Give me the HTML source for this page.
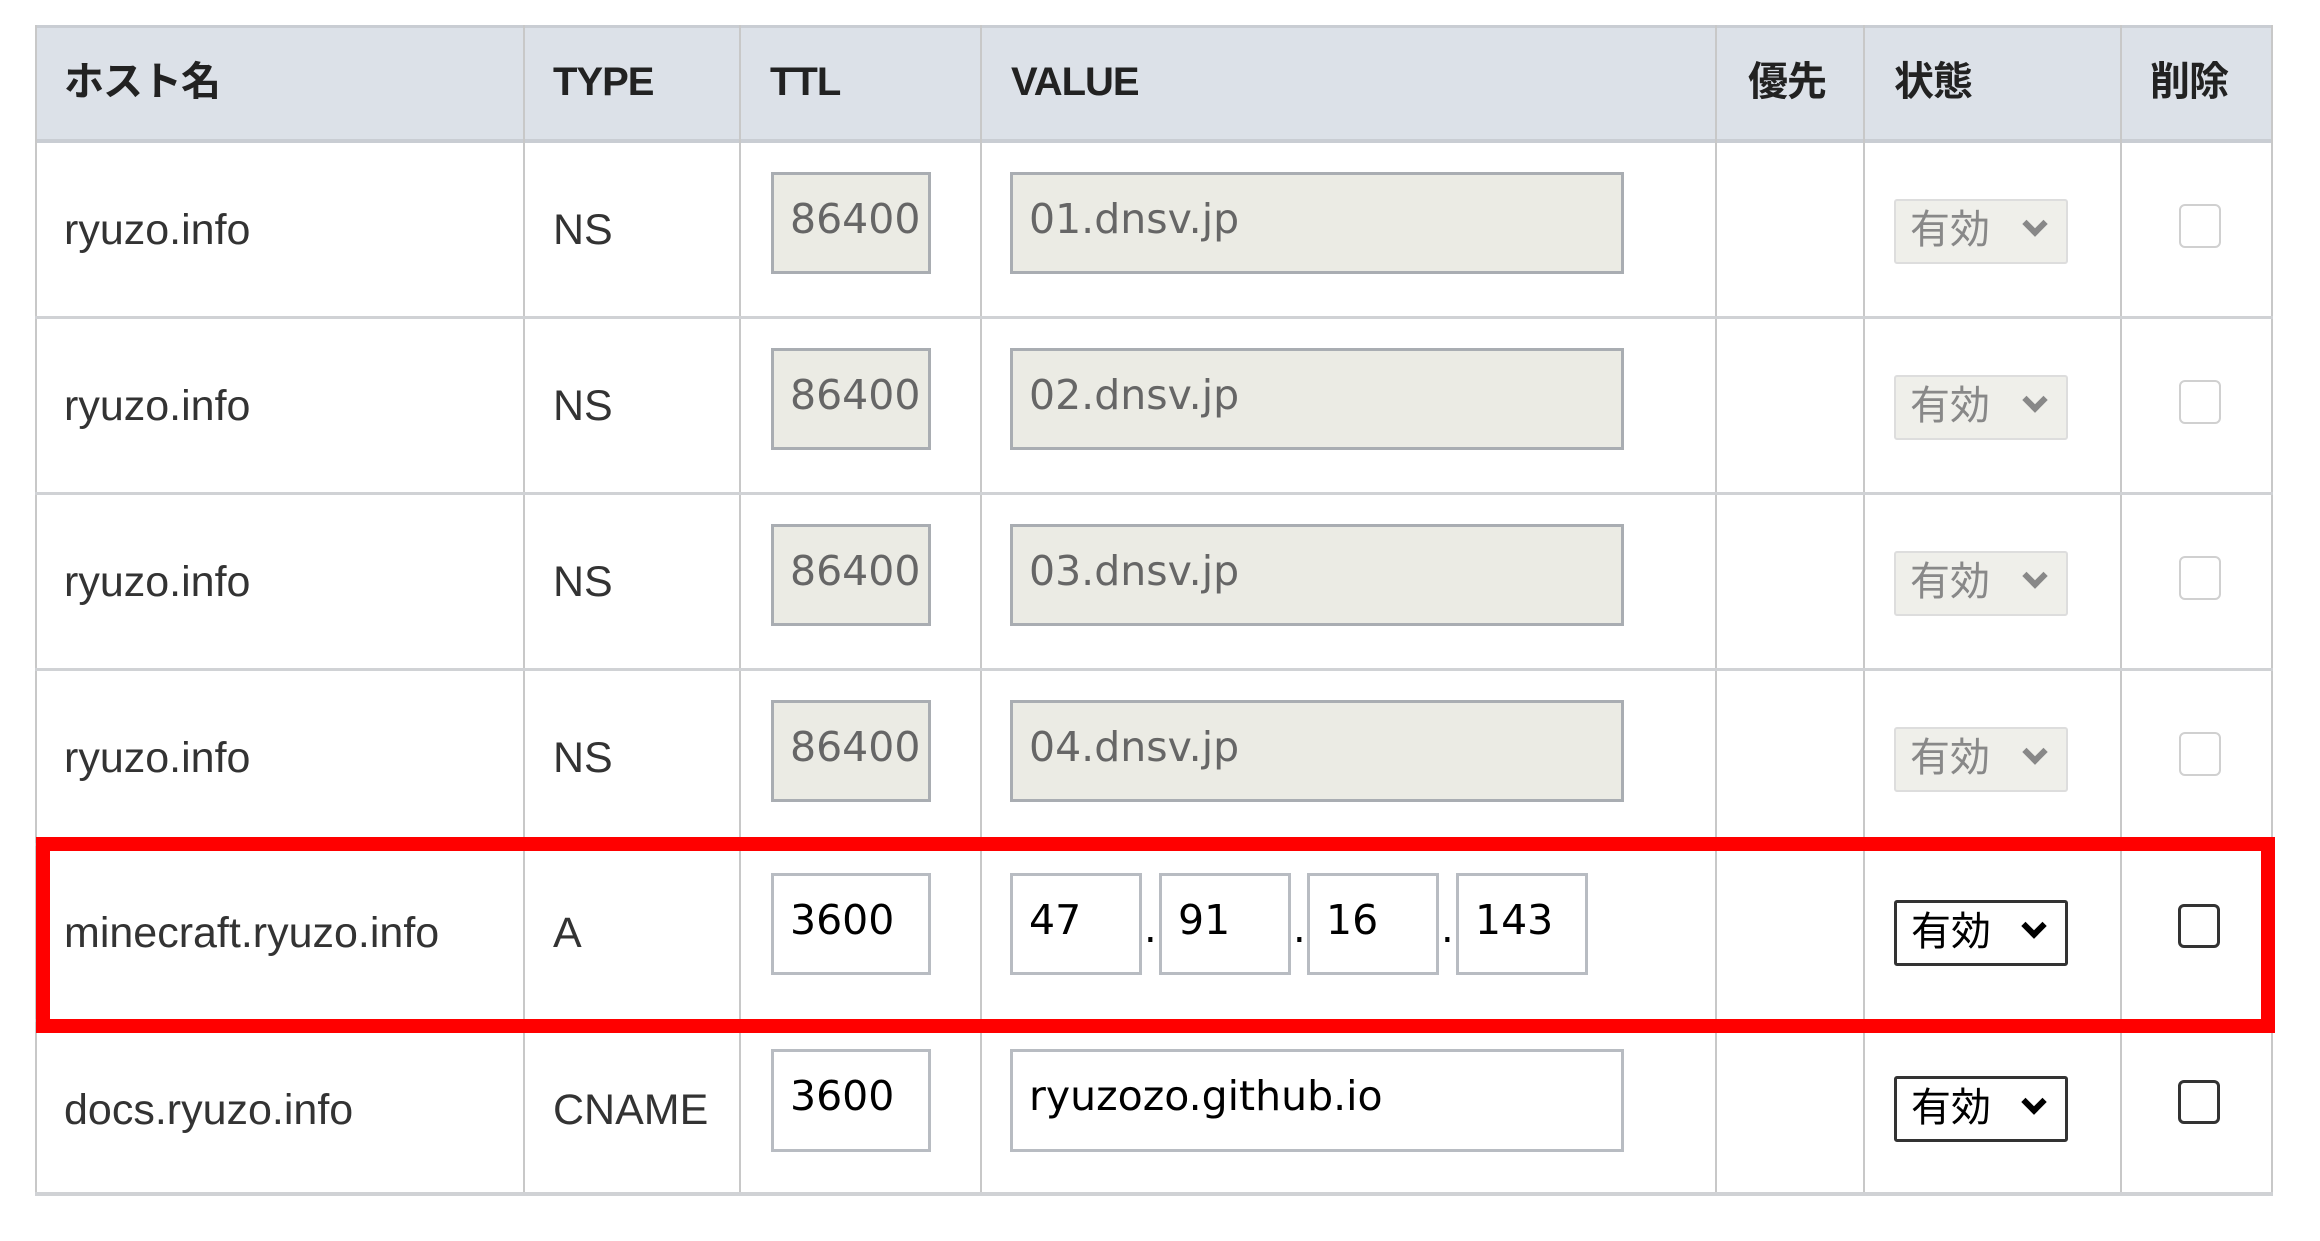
<!DOCTYPE html>
<html><head><meta charset="utf-8"><style>
*{box-sizing:border-box;margin:0;padding:0}
body{width:2320px;height:1241px;background:#fff;position:relative;overflow:hidden;font-family:"Liberation Sans","Noto Sans CJK JP",sans-serif;color:#333}
.a{position:absolute}
.hdr{left:35px;top:25px;width:2238px;height:118px;background:#dce1e8;border-top:3px solid #c9cdd3;border-bottom:4px solid #c9cdd3}
.vl{width:2px;background:#c8c8c8;top:25px;height:1170px}
.hl{left:35px;width:2238px;height:3px;background:#d0d2d5}
.ht{font-weight:bold;font-size:40px;color:#222;top:58px;line-height:48px;letter-spacing:-1px}
.ct{font-size:43px;line-height:48px;letter-spacing:0px;color:#333}
.in{border:3px solid #b8bcc2;background:#fff;font-family:"DejaVu Sans",sans-serif;font-size:41px;color:#000;padding-left:16px;line-height:88px;overflow:hidden;white-space:nowrap}
.dis{background:#ebebe4;color:#666;border-color:#a9adb2}
.sel{border:3px solid #333;background:#fff;font-size:40px;color:#000;padding-left:14px;line-height:58px;border-radius:3px}
.sel.d{border:2px solid #ddd;background:#efefea;color:#888}
.chev{position:absolute;right:22px;top:14px;width:18px;height:18px;border-right:6px solid currentColor;border-bottom:6px solid currentColor;transform:rotate(45deg)}
.cb{width:42px;height:44px;border:3px solid #333;border-radius:6px;background:#fff}
.cb.d{border:2px solid #d0d0d0}
.dot{font-family:"DejaVu Sans",sans-serif;font-size:40px;color:#000}
</style></head><body>
<div class="a hdr"></div>
<div class="a ht" style="left:64px">ホスト名</div>
<div class="a ht" style="left:553px">TYPE</div>
<div class="a ht" style="left:770px">TTL</div>
<div class="a ht" style="left:1011px">VALUE</div>
<div class="a ht" style="left:1748px">優先</div>
<div class="a ht" style="left:1894px">状態</div>
<div class="a ht" style="left:2150px">削除</div>

<div class="a vl" style="left:35px"></div>
<div class="a vl" style="left:523px"></div>
<div class="a vl" style="left:739px"></div>
<div class="a vl" style="left:980px"></div>
<div class="a vl" style="left:1715px"></div>
<div class="a vl" style="left:1863px"></div>
<div class="a vl" style="left:2120px"></div>
<div class="a vl" style="left:2271px"></div>

<div class="a hl" style="top:316px"></div>
<div class="a hl" style="top:492px"></div>
<div class="a hl" style="top:668px"></div>
<div class="a hl" style="top:843px"></div>
<div class="a hl" style="top:1019px"></div>
<div class="a hl" style="top:1192px;height:4px"></div>

<div class="a ct" style="left:64px;top:206px">ryuzo.info</div>
<div class="a ct" style="left:553px;top:206px">NS</div>
<div class="a in dis" style="left:771px;top:172px;width:160px;height:102px">86400</div>
<div class="a in dis" style="left:1010px;top:172px;width:614px;height:102px">01.dnsv.jp</div>
<div class="a sel d" style="left:1894px;top:199px;width:174px;height:65px">有効<span class="chev"></span></div>
<div class="a cb d" style="left:2179px;top:204px"></div>

<div class="a ct" style="left:64px;top:382px">ryuzo.info</div>
<div class="a ct" style="left:553px;top:382px">NS</div>
<div class="a in dis" style="left:771px;top:348px;width:160px;height:102px">86400</div>
<div class="a in dis" style="left:1010px;top:348px;width:614px;height:102px">02.dnsv.jp</div>
<div class="a sel d" style="left:1894px;top:375px;width:174px;height:65px">有効<span class="chev"></span></div>
<div class="a cb d" style="left:2179px;top:380px"></div>

<div class="a ct" style="left:64px;top:558px">ryuzo.info</div>
<div class="a ct" style="left:553px;top:558px">NS</div>
<div class="a in dis" style="left:771px;top:524px;width:160px;height:102px">86400</div>
<div class="a in dis" style="left:1010px;top:524px;width:614px;height:102px">03.dnsv.jp</div>
<div class="a sel d" style="left:1894px;top:551px;width:174px;height:65px">有効<span class="chev"></span></div>
<div class="a cb d" style="left:2179px;top:556px"></div>

<div class="a ct" style="left:64px;top:734px">ryuzo.info</div>
<div class="a ct" style="left:553px;top:734px">NS</div>
<div class="a in dis" style="left:771px;top:700px;width:160px;height:102px">86400</div>
<div class="a in dis" style="left:1010px;top:700px;width:614px;height:102px">04.dnsv.jp</div>
<div class="a sel d" style="left:1894px;top:727px;width:174px;height:65px">有効<span class="chev"></span></div>
<div class="a cb d" style="left:2179px;top:732px"></div>

<div class="a ct" style="left:64px;top:909px">minecraft.ryuzo.info</div>
<div class="a ct" style="left:553px;top:909px">A</div>
<div class="a in" style="left:771px;top:873px;width:160px;height:102px">3600</div>
<div class="a in" style="left:1010px;top:873px;width:132px;height:102px">47</div>
<div class="a dot" style="left:1144px;top:906px">.</div>
<div class="a in" style="left:1159px;top:873px;width:132px;height:102px">91</div>
<div class="a dot" style="left:1293px;top:906px">.</div>
<div class="a in" style="left:1307px;top:873px;width:132px;height:102px">16</div>
<div class="a dot" style="left:1441px;top:906px">.</div>
<div class="a in" style="left:1456px;top:873px;width:132px;height:102px">143</div>
<div class="a sel" style="left:1894px;top:900px;width:174px;height:66px">有効<span class="chev"></span></div>
<div class="a cb" style="left:2178px;top:904px"></div>

<div class="a ct" style="left:64px;top:1086px">docs.ryuzo.info</div>
<div class="a ct" style="left:553px;top:1086px">CNAME</div>
<div class="a in" style="left:771px;top:1049px;width:160px;height:103px">3600</div>
<div class="a in" style="left:1010px;top:1049px;width:614px;height:103px">ryuzozo.github.io</div>
<div class="a sel" style="left:1894px;top:1076px;width:174px;height:66px">有効<span class="chev"></span></div>
<div class="a cb" style="left:2178px;top:1080px"></div>

<div class="a" style="left:36px;top:837px;width:2239px;height:196px;border:14px solid #ff0000"></div>
</body></html>
